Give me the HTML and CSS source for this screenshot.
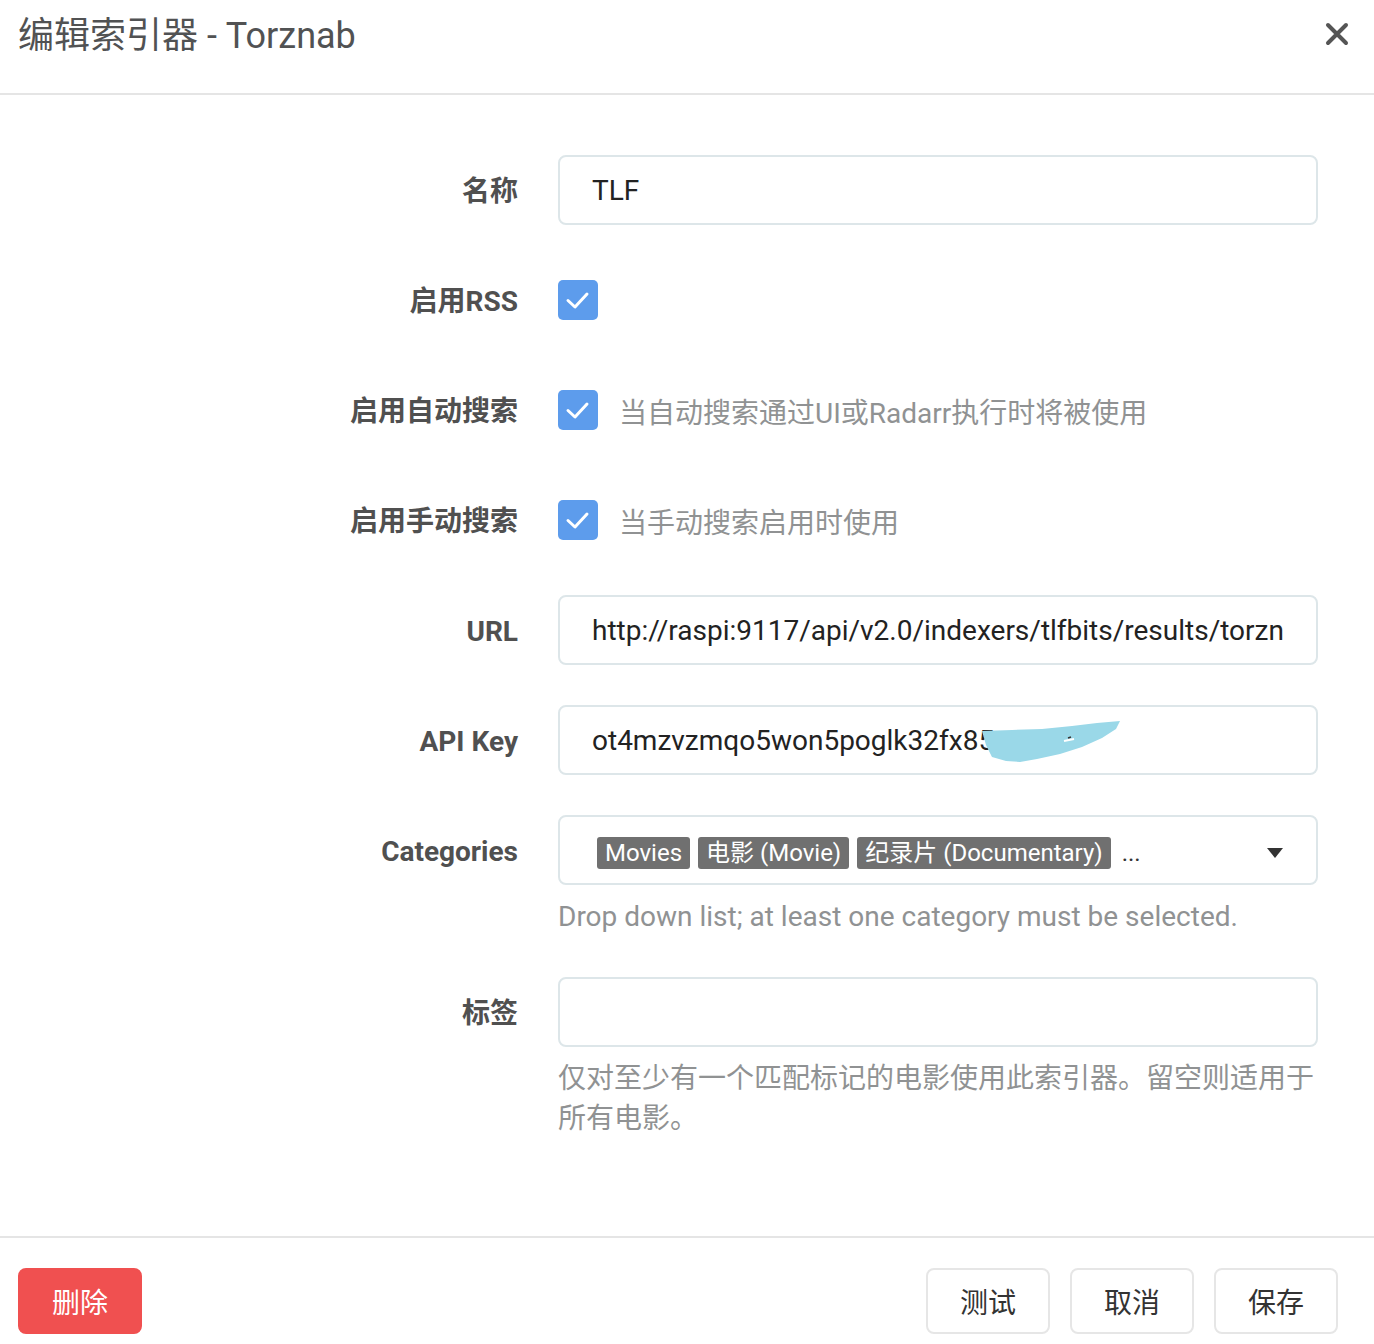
FILE: index.html
```html
<!DOCTYPE html>
<html lang="zh">
<head>
<meta charset="utf-8">
<title>编辑索引器 - Torznab</title>
<link rel="stylesheet" href="styles.css">
</head>
<body>
<div class="modal">
  <header class="modal-header">
    <h1 class="title">编辑索引器 - Torznab</h1>
    <button class="close" aria-label="close">
      <svg width="24" height="24" viewBox="0 0 24 24"><path d="M3 3 L21 21 M21 3 L3 21" stroke="#555" stroke-width="4" stroke-linecap="round" fill="none"/></svg>
    </button>
  </header>

  <div class="modal-body">
    <div class="form-group">
      <label class="label">名称</label>
      <div class="field"><input class="input" type="text" value="TLF"></div>
    </div>

    <div class="form-group">
      <label class="label">启用RSS</label>
      <div class="field check-field">
        <span class="checkbox"><svg width="40" height="40" viewBox="0 0 40 40"><path d="M10 20.5 L17 27 L29 14" stroke="#fff" stroke-width="3" stroke-linecap="round" stroke-linejoin="round" fill="none"/></svg></span>
      </div>
    </div>

    <div class="form-group">
      <label class="label">启用自动搜索</label>
      <div class="field check-field">
        <span class="checkbox"><svg width="40" height="40" viewBox="0 0 40 40"><path d="M10 20.5 L17 27 L29 14" stroke="#fff" stroke-width="3" stroke-linecap="round" stroke-linejoin="round" fill="none"/></svg></span>
        <span class="check-help">当自动搜索通过UI或Radarr执行时将被使用</span>
      </div>
    </div>

    <div class="form-group">
      <label class="label">启用手动搜索</label>
      <div class="field check-field">
        <span class="checkbox"><svg width="40" height="40" viewBox="0 0 40 40"><path d="M10 20.5 L17 27 L29 14" stroke="#fff" stroke-width="3" stroke-linecap="round" stroke-linejoin="round" fill="none"/></svg></span>
        <span class="check-help">当手动搜索启用时使用</span>
      </div>
    </div>

    <div class="form-group">
      <label class="label">URL</label>
      <div class="field"><input class="input" type="text" value="http://raspi:9117/api/v2.0/indexers/tlfbits/results/torznab"></div>
    </div>

    <div class="form-group">
      <label class="label">API Key</label>
      <div class="field redact-field">
        <input class="input" type="text" value="ot4mzvzmqo5won5poglk32fx85">
        <svg class="redact" width="140" height="46" viewBox="0 0 140 46"><path d="M0 10 L30 9 L60 8 L90 5 L115 2 L138 0 L134 8 L120 17 L100 26 L78 33 L55 38 L38 41 L24 40 L10 36 L4 24 Z" fill="#9ad8e8"/><path d="M82 20 L92 18" stroke="#fff" stroke-width="2"/><path d="M86 17 L89 16" stroke="#333" stroke-width="1.5"/></svg>
      </div>
    </div>

    <div class="form-group">
      <label class="label">Categories</label>
      <div class="field">
        <div class="select">
          <span class="tag">Movies</span>
          <span class="tag">电影 (Movie)</span>
          <span class="tag">纪录片 (Documentary)</span>
          <span class="more">...</span>
          <svg class="caret" width="16" height="10" viewBox="0 0 16 10"><path d="M0 0 L16 0 L8 10 Z" fill="#333"/></svg>
        </div>
        <p class="help">Drop down list; at least one category must be selected.</p>
      </div>
    </div>

    <div class="form-group">
      <label class="label">标签</label>
      <div class="field">
        <div class="input tag-input"></div>
        <p class="help">仅对至少有一个匹配标记的电影使用此索引器。留空则适用于所有电影。</p>
      </div>
    </div>
  </div>

  <footer class="modal-footer">
    <button class="btn btn-danger">删除</button>
    <div class="footer-right">
      <button class="btn">测试</button>
      <button class="btn">取消</button>
      <button class="btn">保存</button>
    </div>
  </footer>
</div>
</body>
</html>
```

FILE: styles.css
```css
* { box-sizing: border-box; }

html, body {
  margin: 0;
  padding: 0;
  background: #fff;
}

body {
  font-family: Roboto, "Noto Sans CJK SC", sans-serif;
  color: #555;
  width: 1374px;
}

.modal {
  width: 1374px;
}

.modal-header {
  display: flex;
  justify-content: space-between;
  align-items: flex-start;
  height: 95px;
  padding: 0 25px 0 18px;
  border-bottom: 2px solid #e5e5e5;
}

.title {
  margin: 14px 0 0 0;
  font-size: 36px;
  line-height: 44px;
  font-weight: 400;
  color: #515253;
}

.close {
  margin-top: 22px;
  padding: 0;
  border: 0;
  background: none;
  width: 24px;
  height: 24px;
  cursor: pointer;
}

.close svg { display: block; }

.modal-body {
  padding: 60px 18px 57px 18px;
}

.form-group {
  display: flex;
  align-items: flex-start;
  margin-bottom: 40px;
}

.label {
  flex: 0 0 540px;
  height: 70px;
  padding-right: 40px;
  padding-top: 3px;
  text-align: right;
  font-size: 28px;
  line-height: 67px;
  font-weight: 700;
  color: #505050;
}

.field {
  flex: 0 0 760px;
  width: 760px;
}

.input {
  display: block;
  width: 760px;
  height: 70px;
  padding: 0 32px;
  border: 2px solid #dde6e9;
  border-radius: 8px;
  font-family: Roboto, "Noto Sans CJK SC", sans-serif;
  font-size: 28px;
  color: #222;
  background: #fff;
  outline: none;
}

.check-field {
  display: flex;
  align-items: center;
  height: 70px;
}

.checkbox {
  display: block;
  width: 40px;
  height: 40px;
  border-radius: 5px;
  background: #5d9cec;
}

.checkbox svg { display: block; }

.check-help {
  margin-left: 21px;
  padding-top: 2px;
  font-size: 28px;
  color: #909293;
}

.redact-field {
  position: relative;
}

.redact {
  position: absolute;
  left: 424px;
  top: 16px;
}

.select {
  display: flex;
  align-items: center;
  height: 70px;
  padding: 5px 33px 0 37px;
  border: 2px solid #dde6e9;
  border-radius: 8px;
  background: #fff;
}

.tag {
  display: inline-block;
  margin-right: 8px;
  padding: 0 8px;
  height: 32px;
  line-height: 32px;
  font-size: 24px;
  color: #fff;
  background: #707070;
  border-radius: 3px;
  white-space: nowrap;
}

.more {
  margin-left: 3px;
  font-size: 24px;
  color: #333;
  line-height: 32px;
}

.caret {
  margin-left: auto;
  display: block;
}

.help {
  margin: 12px 0 0 0;
  font-size: 28px;
  line-height: 40px;
  color: #909293;
}

.modal-footer {
  display: flex;
  justify-content: space-between;
  align-items: flex-start;
  border-top: 2px solid #e5e5e5;
  padding: 30px 36px 0 18px;
  height: 108px;
}

.footer-right {
  display: flex;
  gap: 20px;
}

.btn {
  width: 124px;
  height: 66px;
  padding: 0;
  border: 2px solid #e6e6e6;
  border-radius: 8px;
  background: #fff;
  font-family: Roboto, "Noto Sans CJK SC", sans-serif;
  font-size: 28px;
  color: #333;
  cursor: pointer;
}

.btn-danger {
  background: #f05050;
  border-color: #f05050;
  color: #fff;
}
```
